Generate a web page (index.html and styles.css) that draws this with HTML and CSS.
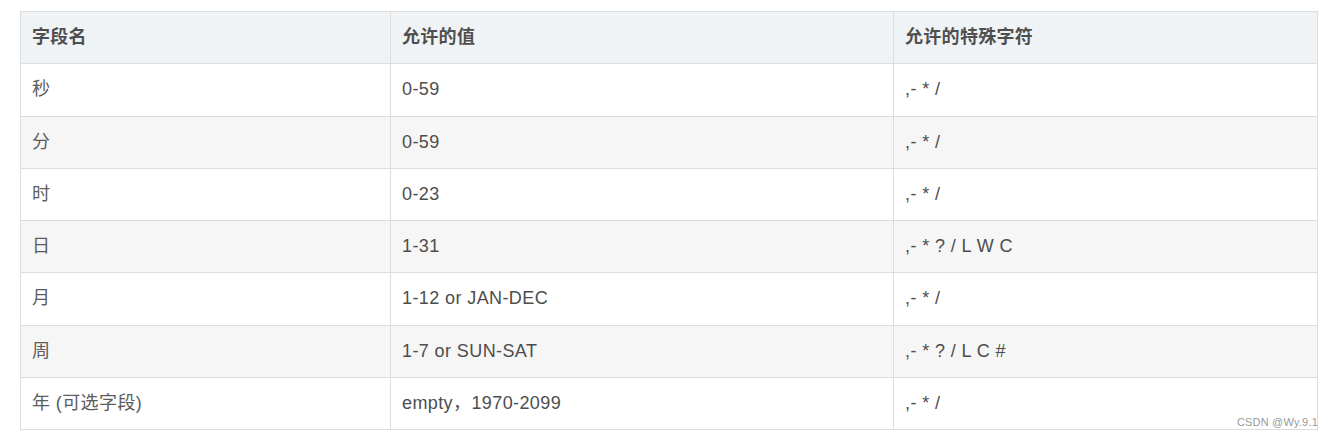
FILE: index.html
```html
<!DOCTYPE html>
<html lang="zh-CN">
<head>
<meta charset="utf-8">
<title>Cron 字段</title>
<link rel="stylesheet" href="styles.css">
</head>
<body>
<div class="page">
  <div class="table-wrap">
    <table class="cron-table">
      <colgroup>
        <col class="c1">
        <col class="c2">
        <col class="c3">
      </colgroup>
      <thead>
        <tr><th>字段名</th><th>允许的值</th><th>允许的特殊字符</th></tr>
      </thead>
      <tbody>
        <tr><td class="name">秒</td><td>0-59</td><td>,- * /</td></tr>
        <tr><td class="name">分</td><td>0-59</td><td>,- * /</td></tr>
        <tr><td class="name">时</td><td>0-23</td><td>,- * /</td></tr>
        <tr><td class="name">日</td><td>1-31</td><td>,- * ? / L W C</td></tr>
        <tr><td class="name">月</td><td>1-12 or JAN-DEC</td><td>,- * /</td></tr>
        <tr><td class="name">周</td><td>1-7 or SUN-SAT</td><td>,- * ? / L C #</td></tr>
        <tr><td class="name">年 (可选字段)</td><td>empty，1970-2099</td><td>,- * /</td></tr>
      </tbody>
    </table>
    <span class="watermark">CSDN @Wy.9.1</span>
  </div>
</div>
</body>
</html>
```

FILE: styles.css
```css
html, body {
  margin: 0;
  padding: 0;
  background: #ffffff;
}

.page {
  padding: 11px 15px 0 20px;
  font-family: "Liberation Sans", Arial, "Noto Sans CJK SC", sans-serif;
}

.table-wrap {
  position: relative;
}

.cron-table {
  width: 100%;
  border-collapse: collapse;
  table-layout: fixed;
  font-size: 18px;
  color: #4d4d4d;
}

.cron-table col.c1 { width: 370px; }
.cron-table col.c2 { width: 503px; }

.cron-table th,
.cron-table td {
  border: 1px solid #dddddd;
  padding: 12px 11px;
  line-height: 27.3px;
  text-align: left;
  vertical-align: middle;
  white-space: nowrap;
}

.cron-table td {
  letter-spacing: 0.4px;
}

.cron-table th {
  background: #eff3f5;
  font-weight: bold;
  color: #4f4f4f;
  letter-spacing: 0.3px;
}

.cron-table tbody tr:nth-child(even) td {
  background: #f6f6f6;
}

.cron-table td.name {
  color: #5c5c5c;
}

.watermark {
  position: absolute;
  right: 0;
  bottom: 1px;
  font-family: "Liberation Sans", Arial, sans-serif;
  font-size: 11px;
  line-height: 13px;
  color: #999999;
  letter-spacing: 0.2px;
}
```
